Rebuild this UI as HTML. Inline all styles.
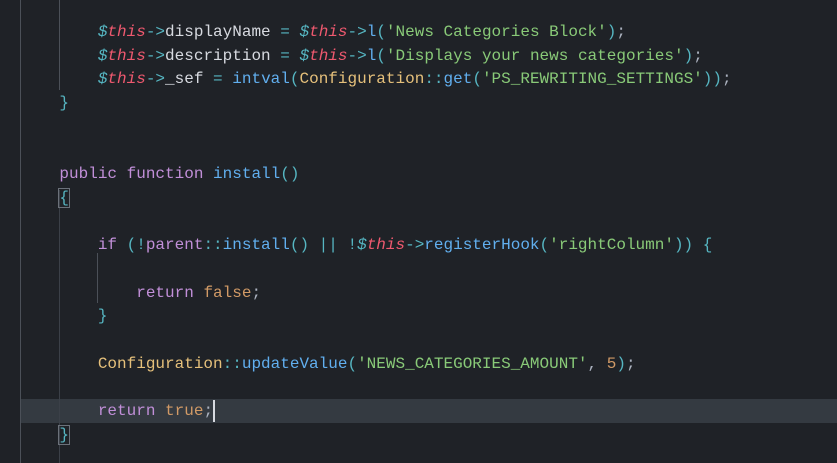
<!DOCTYPE html>
<html><head><meta charset="utf-8"><style>
html,body{margin:0;padding:0;background:#1f2227;width:837px;height:463px;overflow:hidden}
.ed{position:absolute;left:0;top:0;width:837px;height:463px;background:#1f2227}
.g{position:absolute;width:1px;background:#3b4048}
.hl{position:absolute;left:20px;top:399px;width:817px;height:24px;background:#343a41}
pre{position:absolute;left:21px;top:21px;margin:0;font-family:"Liberation Mono",monospace;font-size:16px;line-height:23.7px;color:#abb2bf;white-space:pre}
.v{color:#ef596f;font-style:italic}.d{color:#56b6c2;font-style:italic}
.o{color:#56b6c2}.p{color:#d7dae0}.s{color:#89ca78}.f{color:#61afef}
.c{color:#e5c07b}.k{color:#c18fd8}.n{color:#d19a66}
.bx{outline:1px solid #6b717a}
.cur{position:absolute;left:213px;top:400px;width:2px;height:22px;background:#d7dae0}
</style></head><body><div class="ed">
<div class="hl"></div>
<div class="g" style="left:20px;top:0;height:463px;background:#4b5058"></div>
<div class="g" style="left:59px;top:0;height:90px;background:#4b5058"></div>
<div class="g" style="left:59px;top:190px;height:273px"></div>
<div class="g" style="left:97px;top:253px;height:50px;background:#4b5058"></div>
<div class="cur"></div>
<pre>        <span class="d">$</span><span class="v">this</span><span class="o">-&gt;</span><span class="p">displayName</span> <span class="o">=</span> <span class="d">$</span><span class="v">this</span><span class="o">-&gt;</span><span class="f">l</span><span class="o">(</span><span class="s">'News Categories Block'</span><span class="o">)</span>;
        <span class="d">$</span><span class="v">this</span><span class="o">-&gt;</span><span class="p">description</span> <span class="o">=</span> <span class="d">$</span><span class="v">this</span><span class="o">-&gt;</span><span class="f">l</span><span class="o">(</span><span class="s">'Displays your news categories'</span><span class="o">)</span>;
        <span class="d">$</span><span class="v">this</span><span class="o">-&gt;</span><span class="p">_sef</span> <span class="o">=</span> <span class="f">intval</span><span class="o">(</span><span class="c">Configuration</span><span class="o">::</span><span class="f">get</span><span class="o">(</span><span class="s">'PS_REWRITING_SETTINGS'</span><span class="o">))</span>;
    <span class="o">}</span>


    <span class="k">public</span> <span class="k">function</span> <span class="f">install</span><span class="o">()</span>
    <span class="o bx">{</span>

        <span class="k">if</span> <span class="o">(!</span><span class="k">parent</span><span class="o">::</span><span class="f">install</span><span class="o">() || !</span><span class="d">$</span><span class="v">this</span><span class="o">-&gt;</span><span class="f">registerHook</span><span class="o">(</span><span class="s">'rightColumn'</span><span class="o">)) {</span>

            <span class="k">return</span> <span class="n">false</span>;
        <span class="o">}</span>

        <span class="c">Configuration</span><span class="o">::</span><span class="f">updateValue</span><span class="o">(</span><span class="s">'NEWS_CATEGORIES_AMOUNT'</span>, <span class="n">5</span><span class="o">)</span>;

        <span class="k">return</span> <span class="n">true</span>;
    <span class="o bx">}</span>
</pre>
</div></body></html>
